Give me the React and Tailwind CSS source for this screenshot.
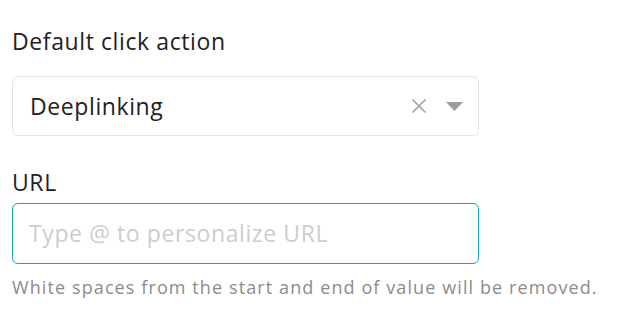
export default function App() {
  const font = { fontFamily: "'Open Sans', 'Noto Sans', sans-serif" };
  return (
    <div className="w-[624px] h-[324px] bg-white pl-3 pt-[26px]" style={font}>
      <div className="w-[467px]">
        <label className="block text-[23px] leading-[30px] tracking-[0.6px] text-[#222]">Default click action</label>
        <div className="mt-[20px] flex h-[60px] items-center rounded-[6px] border border-[#e3e4e8] pl-[17px] pr-[15px]">
          <span className="flex-1 text-[23px] tracking-[0.6px] text-[#222]">Deeplinking</span>
          <svg width="16" height="16" viewBox="0 0 16 16" className="mr-[19px]">
            <path d="M1.5 1.5L14.5 14.5M14.5 1.5L1.5 14.5" stroke="#a3a3a3" strokeWidth="1.7" />
          </svg>
          <svg width="17" height="9" viewBox="0 0 17 9">
            <path d="M0 0H17L8.5 9Z" fill="#9d9d9d" />
          </svg>
        </div>
        <label className="mt-[31px] block text-[23px] leading-[30px] tracking-[0.6px] text-[#222]">URL</label>
        <div className="mt-[6px] flex h-[61px] items-center rounded-[6px] border border-[#1aa5b8] px-[16px]">
          <span className="text-[23px] tracking-[0.6px] text-[#cdcdcd]">Type @ to personalize URL</span>
        </div>
      </div>
      <p className="mt-[11px] text-[18px] leading-[24px] tracking-[1.1px] text-[#8c8c8c] whitespace-nowrap">White spaces from the start and end of value will be removed.</p>
    </div>
  );
}
